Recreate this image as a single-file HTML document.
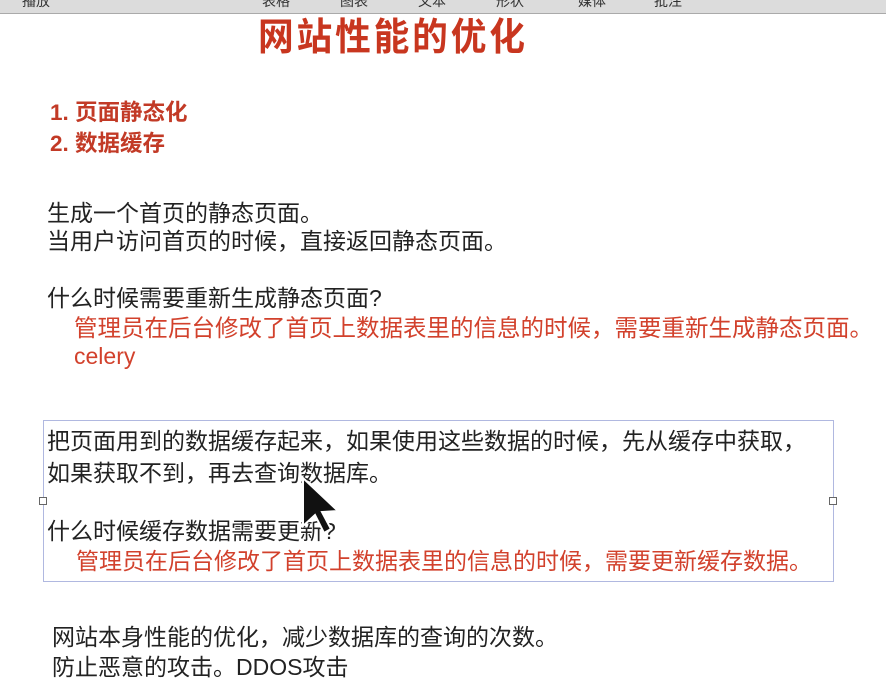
<!DOCTYPE html>
<html><head><meta charset="utf-8"><style>
body{margin:0;width:886px;height:700px;background:#fff;position:relative;overflow:hidden;font-family:"Liberation Sans","Noto Sans CJK SC",sans-serif;}
.t{position:absolute;white-space:nowrap;font-size:23px;line-height:30px;color:#222;}
.r{color:#d2412c;}
.top{position:absolute;left:0;top:0;width:886px;height:13px;background:#dcdcdc;border-bottom:1px solid #aaa;overflow:hidden;}
.top span{position:absolute;top:-9px;font-size:14px;color:#333;}
.h{position:absolute;width:6px;height:6px;border:1px solid #666;background:#fff;}
</style></head><body>
<div class="top"><span style="left:22px">播放</span><span style="left:262px">表格</span><span style="left:340px">图表</span><span style="left:418px">文本</span><span style="left:496px">形状</span><span style="left:578px">媒体</span><span style="left:654px">批注</span></div>
<div class="t r" style="left:258px;top:15px;font-size:38px;line-height:46px;font-weight:bold;letter-spacing:3px;color:#c8361f;transform:scaleX(0.94);transform-origin:left">网站性能的优化</div>
<div class="t r" style="left:50px;top:98px;font-weight:bold;font-size:22.5px;color:#c23a26">1. 页面静态化</div>
<div class="t r" style="left:50px;top:129px;font-weight:bold;font-size:22.5px;color:#c23a26">2. 数据缓存</div>
<div class="t" style="left:47px;top:198px">生成一个首页的静态页面。</div>
<div class="t" style="left:47px;top:226px">当用户访问首页的时候，直接返回静态页面。</div>
<div class="t" style="left:47px;top:283px">什么时候需要重新生成静态页面?</div>
<div class="t r" style="left:74px;top:313px;font-size:23.5px">管理员在后台修改了首页上数据表里的信息的时候，需要重新生成静态页面。</div>
<div class="t r" style="left:74px;top:341px">celery</div>
<div style="position:absolute;left:43px;top:420px;width:789px;height:160px;border:1px solid #b0b8e0;"></div>
<div class="h" style="left:39px;top:497px"></div><div class="h" style="left:829px;top:497px"></div>
<div class="t" style="left:47px;top:426px">把页面用到的数据缓存起来，如果使用这些数据的时候，先从缓存中获取，</div>
<div class="t" style="left:47px;top:458px">如果获取不到，再去查询数据库。</div>
<div class="t" style="left:47px;top:516px">什么时候缓存数据需要更新?</div>
<div class="t r" style="left:76px;top:546px">管理员在后台修改了首页上数据表里的信息的时候，需要更新缓存数据。</div>
<svg style="position:absolute;left:300px;top:476px" width="46" height="60" viewBox="0 0 46 60"><path d="M3 2 L3 50 L15 39 L24 57 L31 53 L22 36 L38 35 Z" fill="#111" stroke="#fff" stroke-width="2"/></svg>
<div class="t" style="left:52px;top:622px">网站本身性能的优化，减少数据库的查询的次数。</div>
<div class="t" style="left:52px;top:652px">防止恶意的攻击。DDOS攻击</div>
</body></html>
